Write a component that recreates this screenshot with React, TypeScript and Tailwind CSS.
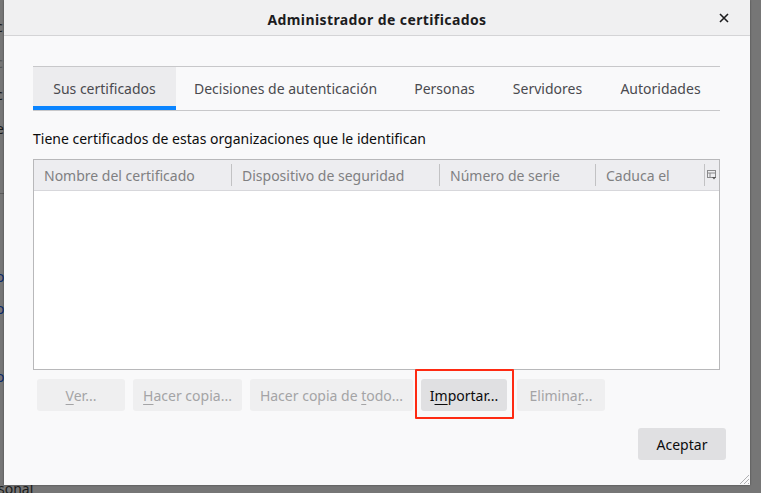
import React from "react";

const font = { fontFamily: '"Noto Sans", "Open Sans", sans-serif' };

interface BtnProps {
  label: React.ReactNode;
  w: string;
  disabled?: boolean;
}

const Btn: React.FC<BtnProps> = ({ label, w, disabled }) => (
  <div
    className={`h-[32px] ${w} flex items-center justify-center rounded-[3px] text-[14px] ${
      disabled ? "bg-[#efeff0] text-[#a4a4a6]" : "bg-[#e0e0e2] text-[#0c0c0d]"
    }`}
  >
    <span>{label}</span>
  </div>
);

const u = (c: string) => <span className="underline underline-offset-[3px]">{c}</span>;

const tabs = [
  { name: "Sus certificados", w: "w-[143px]", active: true },
  { name: "Decisiones de autenticación", w: "w-[219px]" },
  { name: "Personas", w: "w-[99px]" },
  { name: "Servidores", w: "w-[107px]" },
  { name: "Autoridades", w: "w-[119px]" },
];

const cols = [
  { name: "Nombre del certificado", w: "w-[198px]" },
  { name: "Dispositivo de seguridad", w: "w-[208px]" },
  { name: "Número de serie", w: "w-[156px]" },
  { name: "Caduca el", w: "w-[109px]" },
];

export default function App() {
  return (
    <div className="relative w-[761px] h-[493px] bg-[#767676] overflow-hidden" style={font}>
      {/* page behind the dialog */}
      <div className="absolute left-0 top-0 w-[10px] h-full text-[14px] text-[#1a1a1a] leading-none">
        <span className="absolute left-[-4px] top-[20px]">c</span>
        <span className="absolute left-[-4px] top-[56px] text-[#555]">c</span>
        <span className="absolute left-[-4px] top-[88px]">c</span>
        <span className="absolute left-[-4px] top-[122px]">e</span>
        <div className="absolute left-0 top-[193px] w-[6px] h-px bg-[#5a5a5a]" />
        <span className="absolute left-[-4px] top-[270px] text-[#0a2a6a]">o</span>
        <span className="absolute left-[-4px] top-[302px] text-[#0a2a6a]">o</span>
        <span className="absolute left-[-4px] top-[370px] text-[#0a2a6a]">o</span>
      </div>
      <span className="absolute left-[-2px] top-[478px] text-[14px] text-[#1a1a1a]">sonal</span>

      {/* dialog */}
      <div className="absolute left-[4px] top-0 w-[746px] h-[485px] bg-[#f9f9fa] flex flex-col shadow-[0_0_2px_rgba(0,0,0,0.4)]">
        <div className="h-[36px] shrink-0 bg-[#f0f0f1] border-b border-[#d4d4d6] flex items-center justify-center relative">
          <span className="pt-[3px] text-[14px] tracking-[0.4px] font-bold text-[#1c1c1e]">Administrador de certificados</span>
          <svg className="absolute right-[21px] top-[13px]" width="10" height="10" viewBox="0 0 10 10">
            <path d="M1 1L9 9M9 1L1 9" stroke="#1c1c1e" strokeWidth="1.6" />
          </svg>
        </div>

        <div className="pl-[29px] pr-[30px] pt-[30px] flex flex-col flex-1">
          <div className="flex border-t border-b border-[#c8c8ca] h-[45px]">
            {tabs.map((t) => (
              <div
                key={t.name}
                className={`${t.w} relative flex items-center justify-center text-[14px] text-[#4a4a4f] ${
                  t.active ? "bg-[#ececee]" : ""
                }`}
              >
                {t.name}
                {t.active && <div className="absolute left-0 right-0 bottom-0 h-[4px] bg-[#0a84ff]" />}
              </div>
            ))}
          </div>

          <div className="mt-[17px] text-[14px] text-[#0c0c0d] leading-[22px]">
            Tiene certificados de estas organizaciones que le identifican
          </div>

          <div className="mt-[9px] h-[211px] border border-[#b8b8ba] bg-white flex flex-col">
            <div className="h-[31px] bg-[#ededf0] border-b border-[#d7d7db] flex items-center">
              {cols.map((c) => (
                <div key={c.name} className={`${c.w} h-[22px] flex items-center pl-[10px] border-r border-[#c2c2c4] text-[14px] text-[#808082]`}>
                  {c.name}
                </div>
              ))}
              <div className="flex-1 flex items-center justify-center">
                <svg width="10" height="10" viewBox="0 0 10 10">
                  <rect x="0.5" y="0.5" width="8" height="7" fill="none" stroke="#8a8a8c" />
                  <path d="M0.5 3H8.5M3 3V7.5" stroke="#8a8a8c" />
                  <path d="M5 7L9 7L7 9.5Z" fill="#555" />
                </svg>
              </div>
            </div>
          </div>

          <div className="mt-[9px] flex items-center pl-[4px]">
            <Btn w="w-[88px]" disabled label={<>{u("V")}er...</>} />
            <div className="ml-[8px]">
              <Btn w="w-[109px]" disabled label={<>{u("H")}acer copia...</>} />
            </div>
            <div className="ml-[8px]">
              <Btn w="w-[163px]" disabled label={<>Hacer copia de {u("t")}odo...</>} />
            </div>
            <div className="ml-[8px] relative">
              <Btn w="w-[86px]" label={<>I{u("m")}portar...</>} />
              <div className="absolute left-[-6px] right-[-7px] top-[-10px] bottom-[-8px] border-2 border-[#fe2a12] rounded-[1px]" />
            </div>
            <div className="ml-[10px]">
              <Btn w="w-[88px]" disabled label={<>Elimina{u("r")}...</>} />
            </div>
          </div>

          <div className="mt-[17px] flex justify-end">
            <div className="mr-[-6px]">
              <Btn w="w-[88px]" label="Aceptar" />
            </div>
          </div>
        </div>

        <svg className="absolute right-0 bottom-0" width="14" height="14" viewBox="0 0 14 14">
          <path d="M13 4L4 13M13 8L8 13M13 12L12 13" stroke="#b0b0b2" strokeWidth="1" />
        </svg>
      </div>
    </div>
  );
}
